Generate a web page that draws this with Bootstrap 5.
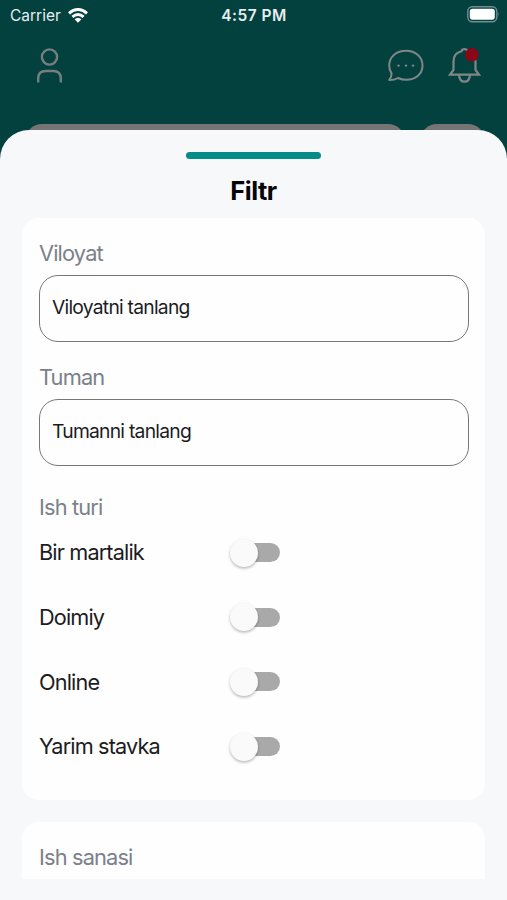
<!DOCTYPE html>
<html lang="uz">
<head>
<meta charset="utf-8">
<meta name="viewport" content="width=device-width, initial-scale=1">
<title>Filtr</title>
<link href="https://cdn.jsdelivr.net/npm/bootstrap@5.3.0/dist/css/bootstrap.min.css" rel="stylesheet">
<style>
body{font-family:Inter,"Liberation Sans",sans-serif;background:#03413f;color:#1c1c1e;width:507px;height:900px}
.phone{height:900px}
.status{height:30px;padding:0 9px 0 10px;color:#e6efef;font-size:15.5px;line-height:30px}
.status>*{flex:1 1 0}
.status .carrier,.clock{padding-top:1px}
.clock{font-weight:600;letter-spacing:.5px}
.tools{height:70px;padding:0 26px 0 36px}
.tools svg,.status svg{display:block}
.peek{height:30px;padding:24px 22px 0 25px;gap:15px;overflow:hidden}
.peek span{background:#777476;height:40px;border-radius:17px}
.peek .tile{width:65px}
.sheet{background:#f6f8fa;border-radius:29px 29px 0 0;height:770px;padding:22px 22px 21px;position:relative}
.grip{width:135px;height:7px;border-radius:4px;background:#058c86}
.title{font-size:25.5px;font-weight:700;letter-spacing:-.5px;color:#060606;line-height:30px;margin:17px 0 12px}
.panel{background:#fefefe;border-radius:17px;padding:22px 16px 0 17px;width:463px}
.panel-main{height:582px}
.panel-next{height:57px;margin-top:22px;border-radius:17px 17px 0 0}
.cap{font-size:21.8px;line-height:26px;color:#7b818a;letter-spacing:-.85px}
.field{height:67px;border:1.5px solid #777;border-radius:19px;padding:0 12.5px 3px 12px;font-size:19.3px;letter-spacing:-.76px;margin-top:9px;background:#fefefe}
.opt{height:64.7px;font-size:21.7px;letter-spacing:-.86px;padding-top:.4px}
.opt .name{width:191px}
.switch{width:50px;height:28px}
.track{width:42px;height:19px;border-radius:10px;background:#a9a9a9;margin-left:8px}
.knob{width:28px;height:28px;border-radius:50%;background:#fafafa;box-shadow:0 1.5px 3px rgba(0,0,0,.28);margin-right:-28px;z-index:1}
</style>
</head>
<body>
<div class="phone d-flex flex-column overflow-hidden">
  <div class="status d-flex align-items-center">
    <div class="d-flex align-items-center"><span class="carrier">Carrier</span>
      <svg width="20" height="15" viewBox="0 0 20 15" style="margin-left:7px" fill="none" stroke="#fff" stroke-width="3"><path d="M1 5.3Q10-2.2 19 5.3M4.4 8.9Q10 4.2 15.6 8.9"/><path d="M6.6 11.2Q10 8.2 13.4 11.2L10 14.7Z" fill="#fff" stroke="none"/></svg>
    </div>
    <div class="clock text-center">4:57 PM</div>
    <div class="d-flex justify-content-end"><svg width="33" height="18" viewBox="0 0 33 18" style="margin-right:-2px"><rect x=".8" y=".8" width="29" height="15" rx="4.5" fill="none" stroke="#708e8e" stroke-width="1.4"/><rect x="2.8" y="2.8" width="25" height="11" rx="2.8" fill="#fff"/><path d="M31.3 6q1.5 2.4 0 4.8z" fill="#708e8e"/></svg></div>
  </div>
  <div class="tools d-flex align-items-center justify-content-between">
    <svg width="27" height="38" viewBox="0 0 27 38" fill="none" stroke="#777e7f" stroke-width="2.4"><circle cx="13.5" cy="11" r="7.6"/><path d="M2.2 36.5V32.5Q2.2 25 9.7 25H17.3Q24.8 25 24.8 32.5V36.5"/></svg>
    <div class="d-flex" style="gap:23px">
      <svg width="37" height="36" viewBox="0 -.6 37 36" fill="none" stroke="#818788" stroke-width="2"><path d="M2.2 32.5C3.8 30.4 4.5 28 4.6 26A14.8 14.8 0 0 1 2.2 18C2.2 8.8 9.8 3.2 19 3.2S35.5 9 35.5 18 28.2 32.2 19 32.2C16 32.2 13.1 31.3 11 30.4C8.6 31.9 5.4 32.5 2.2 32.5Z" stroke-linejoin="round"/><g fill="#818788" stroke="none"><circle cx="11.5" cy="18" r="1.2"/><circle cx="19" cy="18" r="1.2"/><circle cx="26" cy="18" r="1.2"/></g></svg>
      <svg width="34" height="36" viewBox="0 0 34 36" fill="none" stroke="#818788" stroke-width="2.2"><path d="M3 27.6H32L28.5 23V14.5C28.5 8.5 25 5.2 20.5 4.2Q20 2.2 17.5 2.2T14.5 4.2C10 5.2 6.5 8.5 6.5 14.5V23Z" stroke-linejoin="miter"/><path d="M12 27.6Q12.4 34.7 17.5 34.7T23 27.6"/><circle cx="24.8" cy="7.7" r="6.8" fill="#8c0618" stroke="none"/></svg>
    </div>
  </div>
  <div class="peek d-flex"><span class="flex-grow-1"></span><span class="tile"></span></div>
  <div class="sheet flex-shrink-0">
    <div class="grip mx-auto"></div>
    <h1 class="title text-center">Filtr</h1>
    <div class="panel panel-main">
      <div class="cap">Viloyat</div>
      <div class="field d-flex align-items-center">Viloyatni tanlang</div>
      <div class="cap" style="margin-top:22px">Tuman</div>
      <div class="field d-flex align-items-center">Tumanni tanlang</div>
      <div class="cap" style="margin-top:28px">Ish turi</div>
      <div class="opt d-flex align-items-center"><span class="name">Bir martalik</span><div class="switch d-flex align-items-center"><span class="knob"></span><span class="track"></span></div></div>
      <div class="opt d-flex align-items-center"><span class="name">Doimiy</span><div class="switch d-flex align-items-center"><span class="knob"></span><span class="track"></span></div></div>
      <div class="opt d-flex align-items-center"><span class="name">Online</span><div class="switch d-flex align-items-center"><span class="knob"></span><span class="track"></span></div></div>
      <div class="opt d-flex align-items-center"><span class="name">Yarim stavka</span><div class="switch d-flex align-items-center"><span class="knob"></span><span class="track"></span></div></div>
    </div>
    <div class="panel panel-next"><div class="cap">Ish sanasi</div></div>
  </div>
</div>
<script src="https://cdn.jsdelivr.net/npm/bootstrap@5.3.0/dist/js/bootstrap.bundle.min.js"></script>
</body>
</html>
